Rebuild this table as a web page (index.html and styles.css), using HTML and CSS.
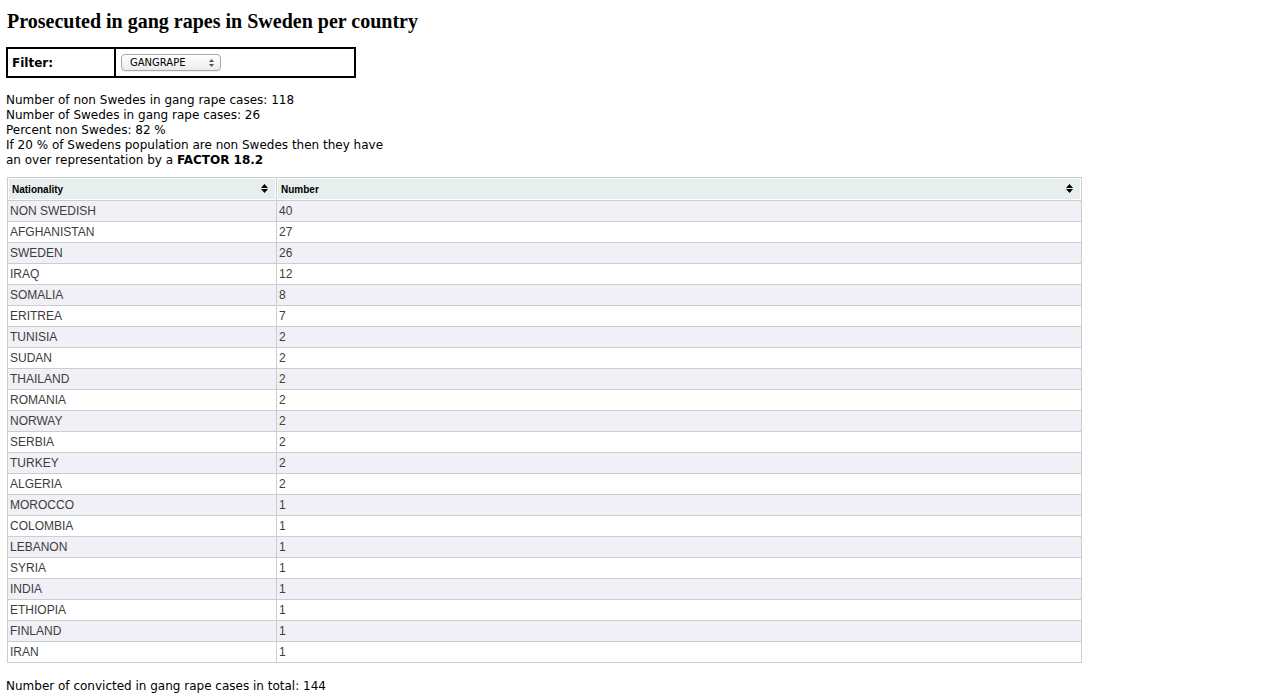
FILE: index.html
```html
<!DOCTYPE html>
<html>
<head>
<meta charset="utf-8">
<title>Prosecuted in gang rapes in Sweden per country</title>
<link rel="stylesheet" href="styles.css">
</head>
<body>
<h2 class="title">Prosecuted in gang rapes in Sweden per country</h2>

<div class="filter">
  <div class="filter-label">Filter:</div>
  <div class="filter-field">
    <div class="select">
      <span class="select-text">GANGRAPE</span>
      <svg class="select-arrows" width="5" height="8" viewBox="0 0 5 8"><polygon points="0,3 2.5,0 5,3" fill="#555"/><polygon points="0,5 5,5 2.5,8" fill="#555"/></svg>
    </div>
  </div>
</div>

<div class="stats">
  <div>Number of non Swedes in gang rape cases: 118</div>
  <div>Number of Swedes in gang rape cases: 26</div>
  <div>Percent non Swedes: 82 %</div>
  <div>If 20 % of Swedens population are non Swedes then they have</div>
  <div>an over representation by a <b>FACTOR 18.2</b></div>
</div>

<table class="data">
  <thead>
    <tr>
      <th class="col-nat"><span class="th-label">Nationality</span><svg class="sort" width="7" height="9" viewBox="0 0 7 9"><polygon points="0,4 3.5,0 7,4" fill="#000"/><polygon points="0,5 7,5 3.5,9" fill="#000"/></svg></th>
      <th><span class="th-label">Number</span><svg class="sort" width="7" height="9" viewBox="0 0 7 9"><polygon points="0,4 3.5,0 7,4" fill="#000"/><polygon points="0,5 7,5 3.5,9" fill="#000"/></svg></th>
    </tr>
  </thead>
  <tbody>
    <tr><td>NON SWEDISH</td><td>40</td></tr>
    <tr><td>AFGHANISTAN</td><td>27</td></tr>
    <tr><td>SWEDEN</td><td>26</td></tr>
    <tr><td>IRAQ</td><td>12</td></tr>
    <tr><td>SOMALIA</td><td>8</td></tr>
    <tr><td>ERITREA</td><td>7</td></tr>
    <tr><td>TUNISIA</td><td>2</td></tr>
    <tr><td>SUDAN</td><td>2</td></tr>
    <tr><td>THAILAND</td><td>2</td></tr>
    <tr><td>ROMANIA</td><td>2</td></tr>
    <tr><td>NORWAY</td><td>2</td></tr>
    <tr><td>SERBIA</td><td>2</td></tr>
    <tr><td>TURKEY</td><td>2</td></tr>
    <tr><td>ALGERIA</td><td>2</td></tr>
    <tr><td>MOROCCO</td><td>1</td></tr>
    <tr><td>COLOMBIA</td><td>1</td></tr>
    <tr><td>LEBANON</td><td>1</td></tr>
    <tr><td>SYRIA</td><td>1</td></tr>
    <tr><td>INDIA</td><td>1</td></tr>
    <tr><td>ETHIOPIA</td><td>1</td></tr>
    <tr><td>FINLAND</td><td>1</td></tr>
    <tr><td>IRAN</td><td>1</td></tr>
  </tbody>
</table>

<div class="total">Number of convicted in gang rape cases in total: 144</div>
</body>
</html>
```

FILE: styles.css
```css
html, body {
  background: #fff;
}
body {
  margin: 0;
  padding: 0 6px;
  font-family: "DejaVu Sans", Verdana, sans-serif;
  font-size: 12px;
  color: #000;
}
.title {
  font-family: "Liberation Serif", "Times New Roman", serif;
  font-weight: bold;
  font-size: 20px;
  line-height: 24px;
  margin: 9px 0 14px 1px;
}
.filter {
  display: flex;
  width: 350px;
  height: 31px;
  box-sizing: border-box;
  border: 2px solid #000;
}
.filter-label {
  width: 108px;
  box-sizing: border-box;
  border-right: 2px solid #000;
  padding-left: 4px;
  font-weight: bold;
  display: flex;
  align-items: center;
}
.filter-field {
  flex: 1;
  display: flex;
  align-items: center;
  padding-left: 5px;
}
.select {
  width: 100px;
  height: 17px;
  box-sizing: border-box;
  border: 1px solid #a8a8a8;
  border-radius: 4px;
  background: linear-gradient(#ffffff, #ececec);
  display: flex;
  align-items: center;
  justify-content: space-between;
  padding: 0 6px 0 8px;
  font-size: 10px;
  box-shadow: 0 1px 0 rgba(0,0,0,0.05);
}
.select-arrows {
  display: block;
}
.stats {
  margin-top: 15px;
  line-height: 15px;
}
.data {
  margin: 9px 0 0 1px;
  width: 1075px;
  border-collapse: separate;
  border-spacing: 1px;
  background: #cdcdcd;
  font-family: "Liberation Sans", Arial, sans-serif;
  text-align: left;
}
.data th {
  background: #e6eeee;
  border: 1px solid #fff;
  padding: 3px 3px;
  font-size: 10px;
  line-height: 13px;
  font-weight: bold;
  color: #000;
}
.data th .th-label {
  vertical-align: middle;
}
.data th .sort {
  float: right;
  margin: 2px 4px 0 0;
}
.col-nat {
  width: 268px;
  box-sizing: border-box;
}
.data td {
  padding: 3px 2px;
  font-size: 12px;
  line-height: 14px;
  color: #3d3d3d;
  background: #fff;
  vertical-align: top;
}
.data tbody tr:nth-child(odd) td {
  background: #f0f0f6;
}
.total {
  margin-top: 16px;
  line-height: 15px;
}
```
